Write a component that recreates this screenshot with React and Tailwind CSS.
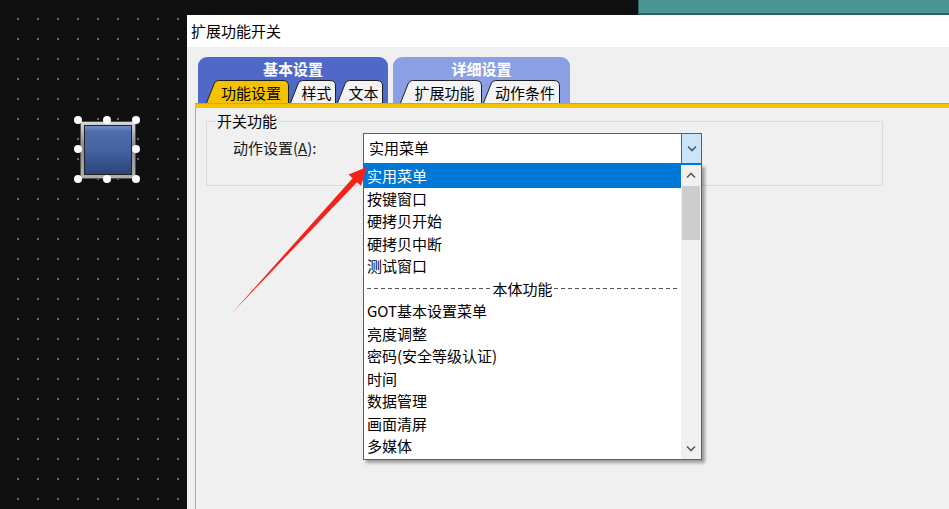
import React from "react";

const FONT = { fontFamily: '"Noto Sans CJK SC", "Noto Sans", sans-serif' };

function SubTab({ label, width, active }) {
  const H = 23;
  const W = width;
  const d = `M0.5 ${H} L8 4 Q9.2 0.5 12.5 0.5 L${W - 6} 0.5 Q${W - 0.5} 0.5 ${W - 0.5} 6 L${W - 0.5} ${H}`;
  return (
    <div className="relative h-[23px] shrink-0" style={{ width: W }}>
      <svg className="absolute inset-0" width={W} height={H} viewBox={`0 0 ${W} ${H}`}>
        <path d={d + " Z"} fill={active ? "#f5c200" : "#f3f3f3"} stroke="none" />
        <path d={d} fill="none" stroke="#1e1e1e" strokeWidth="1" />
      </svg>
      <div className="relative flex h-full items-center justify-center pl-[7px] pt-[1px] text-[15px] leading-none text-black">
        {label}
      </div>
    </div>
  );
}

function Chevron({ down = true, className = "" }) {
  return (
    <svg className={className} width="10" height="7" viewBox="0 0 10 7">
      <path
        d={down ? "M1 1.5 L5 5.5 L9 1.5" : "M1 5.5 L5 1.5 L9 5.5"}
        fill="none"
        stroke="#5a5a5a"
        strokeWidth="1.6"
      />
    </svg>
  );
}

const items = [
  { t: "实用菜单", sel: true },
  { t: "按键窗口" },
  { t: "硬拷贝开始" },
  { t: "硬拷贝中断" },
  { t: "测试窗口" },
  { t: "本体功能", sep: true },
  { t: "GOT基本设置菜单" },
  { t: "亮度调整" },
  { t: "密码(安全等级认证)" },
  { t: "时间" },
  { t: "数据管理" },
  { t: "画面清屏" },
  { t: "多媒体" },
];

function Handle({ cls }) {
  return <div className={`absolute h-[8px] w-[8px] rounded-full bg-white ${cls}`} />;
}

export default function App() {
  return (
    <div
      className="relative flex h-[509px] w-[949px] overflow-hidden bg-[#0f0f0f] bg-[radial-gradient(circle,#6a6a6a_0.9px,transparent_1.2px)] bg-[size:20px_20px] bg-[position:8px_9px]"
      style={FONT}
    >
      {/* Canvas area */}
      <div className="relative h-full w-[187px] shrink-0">
        <div className="absolute left-[80px] top-[121px] h-[58px] w-[56px] rounded-[2px] border border-[#505050] bg-[linear-gradient(#d8d8d8,#8c8c8c_40%,#b0b0b0)] p-[3px]">
          <div className="h-full w-full border border-[#222] bg-[linear-gradient(#6f8cc4_0%,#4d6cab_12%,#4563a2_50%,#2c4477_100%)]" />
        </div>
        <Handle cls="left-[74px] top-[116px]" />
        <Handle cls="left-[103px] top-[116px]" />
        <Handle cls="left-[132px] top-[116px]" />
        <Handle cls="left-[74px] top-[145px]" />
        <Handle cls="left-[132px] top-[145px]" />
        <Handle cls="left-[74px] top-[175px]" />
        <Handle cls="left-[103px] top-[175px]" />
        <Handle cls="left-[132px] top-[175px]" />
      </div>

      {/* Right side */}
      <div className="flex h-full flex-1 flex-col">
        <div className="flex h-[15px] shrink-0">
          <div className="w-[451px]" />
          <div className="flex-1 border-b-2 border-l border-[#2f5f5f] bg-[#4a9696]" />
        </div>

        {/* Dialog */}
        <div className="flex flex-1 flex-col bg-[#f0f0f0]">
          <div className="flex h-[32px] shrink-0 items-center bg-white pl-[4px] text-[15px] text-black">
            扩展功能开关
          </div>

          <div className="flex flex-1 flex-col pl-[8px]">
            {/* Tabs */}
            <div className="flex h-[56px] shrink-0 items-end gap-[5px] pl-[3px]">
              <div className="flex h-[46px] w-[190px] flex-col rounded-t-[9px] bg-[#5069c9]">
                <div className="flex h-[25px] items-center justify-center text-[15px] font-bold leading-none text-white">
                  基本设置
                </div>
                <div className="flex flex-1 items-end gap-[1px] pl-[8px]">
                  <SubTab label="功能设置" width={83} active />
                  <SubTab label="样式" width={46} />
                  <SubTab label="文本" width={46} />
                </div>
              </div>
              <div className="flex h-[46px] w-[177px] flex-col rounded-t-[9px] bg-[#8a9fe4]">
                <div className="flex h-[25px] items-center justify-center text-[15px] font-bold leading-none text-white">
                  详细设置
                </div>
                <div className="flex flex-1 items-end gap-[1px] pl-[7px]">
                  <SubTab label="扩展功能" width={82} />
                  <SubTab label="动作条件" width={77} />
                </div>
              </div>
            </div>

            {/* Panel */}
            <div className="h-[1px] shrink-0 bg-[#c4a640]" />
            <div className="h-[4px] shrink-0 bg-[#f5c200]" />
            <div className="flex flex-1 flex-col border-l border-[#a8a8a8] pl-[10px] pt-[13px]">
              <div className="relative h-[65px] w-[677px] border border-[#dadada]">
                <span className="absolute left-[9px] top-[-11px] bg-[#f0f0f0] px-[1px] text-[15px] leading-[20px] text-black">
                  开关功能
                </span>
                <div className="flex items-center pt-[11px]">
                  <div className="w-[156px] pl-[26px] text-[15px] text-[#1a1a1a]">
                    动作设置(<span className="underline">A</span>):
                  </div>
                  {/* Combobox */}
                  <div className="relative">
                    <div className="flex h-[31px] w-[339px] border border-[#0078d7] bg-white">
                      <div className="flex flex-1 items-center pl-[5px] text-[15px] text-black">实用菜单</div>
                      <div className="flex w-[20px] items-center justify-center border-l border-[#0078d7] bg-[#cce4f7]">
                        <Chevron />
                      </div>
                    </div>
                    {/* Dropdown list */}
                    <div className="absolute left-0 top-[31px] z-10 flex h-[296px] w-[339px] border border-[#0078d7] bg-white shadow-[3px_3px_3px_rgba(0,0,0,0.35)]">
                      <div className="flex flex-1 flex-col">
                        {items.map((it) =>
                          it.sep ? (
                            <div key={it.t} className="flex h-[22.5px] items-center pl-[3px] pr-[3px] text-[15px] text-black">
                              <div className="h-px flex-1 bg-[repeating-linear-gradient(90deg,#555_0_4px,transparent_4px_7px)]" />
                              <span className="px-[1px]">{it.t}</span>
                              <div className="h-px flex-1 bg-[repeating-linear-gradient(90deg,#555_0_4px,transparent_4px_7px)]" />
                            </div>
                          ) : (
                            <div
                              key={it.t}
                              className={`flex h-[22.5px] items-center pl-[3px] text-[15px] ${
                                it.sel ? "bg-[#0078d7] text-white" : "text-black"
                              }`}
                            >
                              {it.t}
                            </div>
                          )
                        )}
                      </div>
                      <div className="flex w-[20px] flex-col bg-[#f0f0f0]">
                        <div className="flex h-[21px] items-center justify-center">
                          <Chevron down={false} />
                        </div>
                        <div className="mx-[1px] h-[54px] bg-[#cdcdcd]" />
                        <div className="flex-1" />
                        <div className="flex h-[22px] items-center justify-center">
                          <Chevron />
                        </div>
                      </div>
                    </div>
                  </div>
                </div>
              </div>
            </div>
          </div>
        </div>
      </div>

      {/* Red annotation arrow */}
      <svg className="pointer-events-none absolute inset-0 z-20" width="949" height="509" viewBox="0 0 949 509">
        <polygon
          points="232,313 352.6,178.2 348.5,174.5 367,167 361,185.8 357,182.2"
          fill="#f5221b"
        />
      </svg>
    </div>
  );
}
